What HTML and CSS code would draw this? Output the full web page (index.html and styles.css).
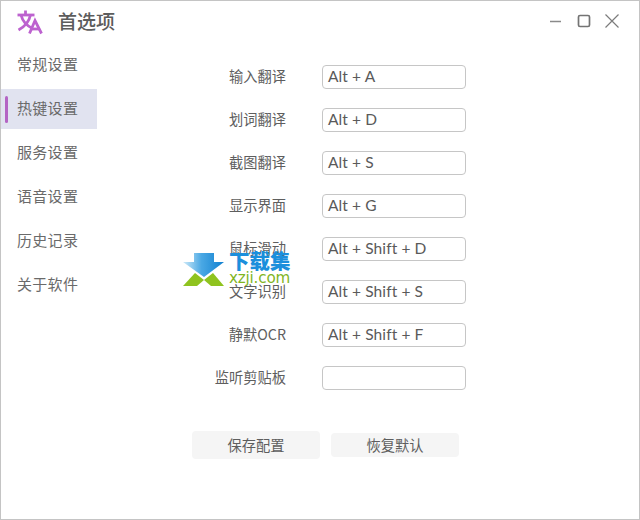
FILE: index.html
```html
<!DOCTYPE html>
<html lang="zh">
<head>
<meta charset="utf-8">
<title>首选项</title>
<link rel="stylesheet" href="styles.css">
</head>
<body>
<div class="window">
  <header class="titlebar">
    <svg class="logo" width="26" height="25" viewBox="0 0 26 25">
      <g fill="none" stroke="#bd62cf" stroke-width="2.800">
        <path d="M0.500 5H17.500"/>
        <path d="M8.500 0.500V5"/>
        <path d="M13.500 5C12 12 7 17 1.500 20"/>
        <path d="M4 5C5.500 11 10.500 16 15.500 18.500"/>
        <path d="M12.500 23.500L18 10.500L24.500 23.500"/>
        <path d="M14.500 19H22.500"/>
      </g>
    </svg>
    <h1 class="title">首选项</h1>
    <div class="controls">
      <svg width="14" height="14" viewBox="0 0 14 14"><path d="M1 7.500H12" stroke="#8a8a8a" stroke-width="1.500" fill="none"/></svg>
      <svg width="14" height="14" viewBox="0 0 14 14"><rect x="1.500" y="1.500" width="11" height="11" rx="1.500" stroke="#747474" stroke-width="1.700" fill="none"/></svg>
      <svg width="14" height="14" viewBox="0 0 14 14"><path d="M0.500 0.500L13.500 13.500M13.500 0.500L0.500 13.500" stroke="#7c7c7c" stroke-width="1.200" fill="none"/></svg>
    </div>
  </header>
  <div class="body">
    <nav class="sidebar">
      <div class="nav-item">常规设置</div>
      <div class="nav-item active">热键设置</div>
      <div class="nav-item">服务设置</div>
      <div class="nav-item">语音设置</div>
      <div class="nav-item">历史记录</div>
      <div class="nav-item">关于软件</div>
    </nav>
    <main class="content">
      <div class="form">
        <div class="row"><label class="label">输入翻译</label><div class="field">Alt + A</div></div>
        <div class="row"><label class="label">划词翻译</label><div class="field">Alt + D</div></div>
        <div class="row"><label class="label">截图翻译</label><div class="field">Alt + S</div></div>
        <div class="row"><label class="label">显示界面</label><div class="field">Alt + G</div></div>
        <div class="row"><label class="label">鼠标滑动</label><div class="field">Alt + Shift + D</div></div>
        <div class="row"><label class="label">文字识别</label><div class="field">Alt + Shift + S</div></div>
        <div class="row"><label class="label">静默OCR</label><div class="field">Alt + Shift + F</div></div>
        <div class="row"><label class="label">监听剪贴板</label><div class="field"></div></div>
      </div>
      <div class="actions">
        <button class="btn btn-save">保存配置</button>
        <button class="btn btn-reset">恢复默认</button>
      </div>
    </main>
  </div>
  <div class="watermark">
    <svg width="42" height="34" viewBox="0 0 42 34">
      <defs>
        <linearGradient id="wm-blue" x1="0" y1="0" x2="1" y2="0">
          <stop offset="0" stop-color="#cfeaf8"/>
          <stop offset="0.450" stop-color="#4aa8e4"/>
          <stop offset="1" stop-color="#1080d0"/>
        </linearGradient>
      </defs>
      <path d="M11 0H31V9H41L21 24L0 9H11Z" fill="url(#wm-blue)"/>
      <path d="M0 33L12 20L21 27L14 33Z" fill="#8fc31f"/>
      <path d="M41 33L30 20L21 27L28 33Z" fill="#8fc31f"/>
    </svg>
    <div class="wm-text">
      <div class="wm-cn">下载集</div>
      <div class="wm-en">xzji.com</div>
    </div>
  </div>
</div>
</body>
</html>
```
FILE: styles.css
```css
* { box-sizing: border-box; }
html, body { margin: 0; padding: 0; }
body { width: 640px; height: 520px; background: #fff; overflow: hidden; }
.window {
  position: relative;
  width: 640px;
  height: 520px;
  border: 1px solid #c4c4c4;
  background: #fff;
  display: flex;
  flex-direction: column;
  font-family: "Noto Sans CJK SC", sans-serif;
  color: #5a5a5a;
}
.titlebar {
  height: 41px;
  flex: none;
  display: flex;
  align-items: center;
  padding: 0 19px 0 16px;
}
.logo { flex: none; display: block; margin-top: 1px; }
.title {
  margin: -2px 0 0 15px;
  font-size: 19px;
  line-height: 26px;
  font-weight: 500;
  color: #5c5c5c;
}
.controls { margin-left: auto; display: flex; gap: 14px; align-items: center; margin-right: 1px; margin-top: -1px; }
.controls svg { display: block; }
.body { flex: 1; display: flex; min-height: 0; }
.sidebar {
  width: 96px;
  flex: none;
  display: flex;
  flex-direction: column;
  gap: 4px;
  padding-top: 3px;
}
.nav-item {
  position: relative;
  height: 40px;
  line-height: 38px;
  padding-left: 16px;
  font-size: 15px;
  letter-spacing: 0.300px;
  font-weight: 400;
  color: #6a6a6a;
}
.nav-item.active { background: #e1e3f0; }
.nav-item.active::before {
  content: "";
  position: absolute;
  left: 4px;
  top: 7px;
  width: 3px;
  height: 27px;
  border-radius: 2px;
  background: #b464c4;
}
.content { flex: 1; display: flex; flex-direction: column; padding-top: 23px; }
.form { display: flex; flex-direction: column; gap: 19px; }
.row { display: flex; align-items: center; height: 24px; }
.label {
  width: 189px;
  text-align: right;
  font-size: 14.250px;
  line-height: 22px;
  margin-bottom: 2px;
  color: #5e5e5e;
}
.field {
  margin-left: 36px;
  width: 144px;
  height: 24px;
  border: 1px solid #c6c6c6;
  border-radius: 4px;
  padding-left: 5px;
  font-family: Lato, sans-serif;
  font-size: 15.500px;
  letter-spacing: 0.100px;
  line-height: 21px;
  font-weight: 400;
  color: #5a5a5a;
}
.actions { display: flex; align-items: center; gap: 11px; margin: 41px 0 0 95px; }
.btn {
  width: 128px;
  border: 0;
  padding: 0 0 1px 0;
  border-radius: 4px;
  background: #f5f5f5;
  font-family: "Noto Sans CJK SC", sans-serif;
  font-size: 14.250px;
  color: #5e5e5e;
}
.btn-save { height: 28px; }
.btn-reset { height: 24px; }
.watermark {
  position: absolute;
  left: 182px;
  top: 252px;
  display: flex;
  gap: 5px;
}
.wm-text { display: flex; flex-direction: column; margin-top: -3px; margin-left: -1px; }
.wm-cn {
  font-size: 20.500px;
  line-height: 21px;
  font-weight: 900;
  color: #1b8fdc;
}
.wm-en {
  font-family: "DejaVu Sans", sans-serif;
  font-size: 15.200px;
  letter-spacing: -0.200px;
  line-height: 15px;
  color: #7fb51f;
}
```
